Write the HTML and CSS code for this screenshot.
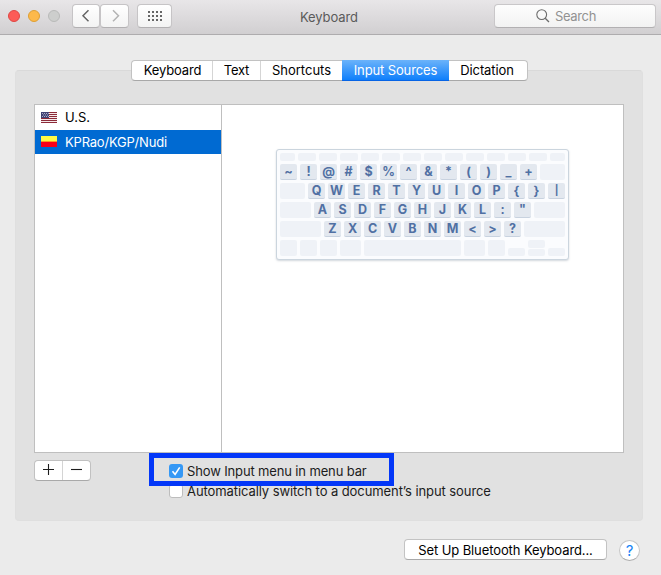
FILE: index.html
```html
<!DOCTYPE html>
<html lang="en">
<head>
<meta charset="utf-8">
<title>Keyboard</title>
<link rel="stylesheet" href="styles.css">
</head>
<body>
<header class="titlebar">
  <div class="lights"><i class="light red"></i><i class="light amber"></i><i class="light gray"></i></div>
  <div class="nav">
    <button class="tool"><svg width="26" height="22" viewBox="0 0 26 22"><path d="M15.500 5.300 10 10.800l5.500 5.500" fill="none" stroke="#666" stroke-width="1.500"/></svg></button>
    <button class="tool"><svg width="26" height="22" viewBox="0 0 26 22"><path d="M11 5.300l5.500 5.500-5.500 5.500" fill="none" stroke="#b4b4b4" stroke-width="1.500"/></svg></button>
  </div>
  <button class="tool grid"><svg width="33" height="22" viewBox="0 0 33 22"><path d="M10 7h14M10 11h14M10 15h14" fill="none" stroke="#666" stroke-width="2" stroke-dasharray="2 2"/></svg></button>
  <h1 class="title">Keyboard</h1>
  <div class="search"><svg width="14" height="14" viewBox="0 0 14 14"><circle cx="5.700" cy="5.600" r="4.900" fill="none" stroke="#6b6b6b" stroke-width="1.100"/><path d="M9.200 9.200l3.800 3.800" stroke="#6b6b6b" stroke-width="1.300"/></svg><span>Search</span></div>
</header>
<main class="panel">
  <nav class="tabs">
    <span class="tab t1">Keyboard</span><span class="tab t2">Text</span><span class="tab t3">Shortcuts</span><span class="tab t4 active">Input Sources</span><span class="tab t5">Dictation</span>
  </nav>
  <section class="sources">
    <ul class="list">
      <li><svg class="flag" width="16" height="11" viewBox="0 0 16 11"><path fill="#f4e9ea" d="M0 0h16v11H0z"/><path d="M0 .5h16M0 2.500h16M0 4.500h16M0 6.500h16M0 8.500h16M0 10.500h16" stroke="#8c2a38"/><path fill="#3f4273" d="M0 0h8v6H0z"/><path d="M1 1.500h7M2 3h6M1 4.500h7" stroke="#c5c7dc" stroke-width=".8" stroke-dasharray="1 1"/></svg><span class="us">U.S.</span></li>
      <li class="selected"><svg class="flag" width="16" height="11" viewBox="0 0 16 11"><path fill="#fffb45" d="M0 0h16v5H0z"/><path fill="#ff9b24" d="M0 5h16v1H0z"/><path fill="#fa0019" d="M0 6h16v5H0z"/></svg><span class="kp">KPRao/KGP/Nudi</span></li>
    </ul>
    <div class="preview">
      <div class="board">
        <div class="row fn"><b class="w15"></b><b></b><b></b><b></b><b></b><b></b><b></b><b></b><b></b><b></b><b></b><b></b><b></b><b class="w15"></b></div>
        <div class="row"><kbd>~</kbd><kbd>!</kbd><kbd>@</kbd><kbd>#</kbd><kbd>$</kbd><kbd>%</kbd><kbd>^</kbd><kbd>&amp;</kbd><kbd>*</kbd><kbd>(</kbd><kbd>)</kbd><kbd>_</kbd><kbd>+</kbd><b class="fill"></b></div>
        <div class="row"><b class="fill"></b><kbd>Q</kbd><kbd>W</kbd><kbd>E</kbd><kbd>R</kbd><kbd>T</kbd><kbd>Y</kbd><kbd>U</kbd><kbd>I</kbd><kbd>O</kbd><kbd>P</kbd><kbd>{</kbd><kbd>}</kbd><kbd class="bar">|</kbd></div>
        <div class="row"><b class="fill"></b><kbd>A</kbd><kbd>S</kbd><kbd>D</kbd><kbd>F</kbd><kbd>G</kbd><kbd>H</kbd><kbd>J</kbd><kbd>K</kbd><kbd>L</kbd><kbd>:</kbd><kbd>"</kbd><b class="fill"></b></div>
        <div class="row"><b class="fill"></b><kbd>Z</kbd><kbd>X</kbd><kbd>C</kbd><kbd>V</kbd><kbd>B</kbd><kbd>N</kbd><kbd>M</kbd><kbd>&lt;</kbd><kbd>&gt;</kbd><kbd>?</kbd><b class="fill"></b></div>
        <div class="row"><b></b><b></b><b></b><b class="w21"></b><b class="fill"></b><b class="w21"></b><b></b><b class="half"></b><div class="stack"><b></b><b></b></div><b class="half"></b></div>
      </div>
    </div>
  </section>
  <footer class="controls">
    <div class="addremove"><span><svg width="27" height="19" viewBox="0 0 27 19"><path d="M8 8.500h11M13.500 3v11" stroke="#1d1d1d" stroke-width="1.100"/></svg></span><span><svg width="27" height="19" viewBox="0 0 27 19"><path d="M8 8.500h11" stroke="#1d1d1d" stroke-width="1.100"/></svg></span></div>
    <div class="options">
      <label class="option highlight"><i class="check on"><svg width="14" height="14" viewBox="0 0 14 14"><path d="M3.500 7.300l2.600 3.100 4.600-7" fill="none" stroke="#fff" stroke-width="1.600"/></svg></i><span class="show">Show Input menu in menu bar</span></label>
      <label class="option second"><i class="check"></i><span class="auto">Automatically switch to a document’s input source</span></label>
    </div>
  </footer>
</main>
<div class="actions"><button class="setup"><span>Set Up Bluetooth Keyboard...</span></button><button class="help">?</button></div>
</body>
</html>
```
FILE: styles.css
```css
* { box-sizing: border-box; }
body { margin: 0; width: 661px; height: 575px; background: #ebebeb; overflow: hidden; font: 13px/16px Inter, "Liberation Sans", sans-serif; color: #1c1c1c; }
button { margin: 0; padding: 0; font: inherit; color: inherit; }
svg { display: block; flex: none; }
span { white-space: nowrap; }

.titlebar { height: 35px; display: flex; align-items: flex-start; background: linear-gradient(#e8e6e8, #d1cfd1); border-bottom: 1px solid #aeacae; }
.lights { display: flex; gap: 8px; padding: 10px 0 0 8px; }
.light { width: 12px; height: 12px; border-radius: 50%; border: 1px solid; }
.red { background: #fc5b57; border-color: #df4744; }
.amber { background: #fdb94a; border-color: #de9f34; }
.gray { background: #cdcecd; border-color: #b9bab9; }
.nav { display: flex; margin: 4px 0 0 12px; }
.tool { width: 28px; height: 24px; background: linear-gradient(#fff, #f3f3f3); border: 1px solid #c6c4c6; border-bottom-color: #b2b0b2; border-radius: 4px; display: flex; align-items: center; justify-content: center; overflow: hidden; }
.tool + .tool { width: 29px; }
.grid { width: 35px; margin: 4px 0 0 8px; }
.title { margin: 9px 0 0 128px; width: 60px; font-size: 13px; line-height: 16px; font-weight: 400; letter-spacing: -.12px; color: #5a5a5a; }
.search { margin: 4px 0 0 134px; width: 162px; height: 24px; display: flex; align-items: center; gap: 5px; padding-left: 41px; letter-spacing: -.35px; color: #929292; background: linear-gradient(#fdfdfd, #f2f2f2); border: 1px solid #c9c7c9; border-bottom-color: #b2b0b2; border-radius: 4px; }

.panel { margin: 35px 0 0 15px; width: 628px; height: 451px; padding: 0 18px; background: #e1e1e1; border: 1px solid #d9d9d9; border-color: #d9d9d9 #dfdfdf #dfdfdf; border-radius: 4px; display: flex; flex-direction: column; }
.tabs { flex: none; display: flex; width: 397px; height: 21px; margin: -11px 0 0 97px; background: #fff; border: 1px solid #c2c2c2; border-bottom-color: #a8a8a8; border-radius: 4px; color: #000; }
.tab { display: flex; justify-content: center; line-height: 19px; border-left: 1px solid #d5d5d5; }
.t1 { width: 80px; border-left: 0; letter-spacing: -.15px; padding-left: 1px; }
.t2 { width: 48px; letter-spacing: -.25px; }
.t3 { width: 82px; }
.t4 { width: 107px; letter-spacing: -.12px; }
.t5 { flex: 1; border-left: 0; letter-spacing: -.1px; padding-right: 2px; }
.active { margin: -1px 0; line-height: 21px; color: #fff; border: 0; background: linear-gradient(#6bb3fa, #0f7ffb); border-bottom: 1px solid #0764e5; }

.sources { flex: none; display: flex; margin-top: 23px; width: 590px; height: 349px; background: #fff; border: 1px solid #bfbfbf; }
.list { width: 187px; margin: 0; padding: 0; list-style: none; border-right: 1px solid #bfbfbf; color: #000; }
.list li { height: 25px; display: flex; align-items: center; gap: 8px; padding: 0 0 1px 6px; }
.list .selected { height: 24px; padding-bottom: 0; background: #006ad2; color: #fff; }
.selected .flag { margin-top: -1px; }
.kp { letter-spacing: -.2px; }
.preview { flex: 1; padding: 44px 0 0 54px; }
.board { width: 293px; height: 111px; padding: 3px; border: 1px solid #cbd5de; border-radius: 3px; background: #fbfcfe; box-shadow: 0 1px 2px rgba(80, 100, 120, .25); display: flex; flex-direction: column; gap: 3px; }
.row { display: flex; gap: 3px; height: 16px; }
.row b { width: 17px; border-radius: 2px; background: #eff2f7; }
.row .fill { flex: 1; }
.row .w21 { width: 21px; }
.row .half { height: 8px; align-self: flex-end; }
.fn { height: 8px; }
.fn b { width: 18px; }
.fn .w15 { width: 15px; }
.stack { display: flex; flex-direction: column; gap: 1px; width: 17px; }
.stack b { flex: 1; }
kbd { width: 17px; height: 16px; border-radius: 2px; background: #e3e8ef; border-bottom: 1px solid #c8d2df; color: #5070a3; font: 700 12.5px/16px Inter, sans-serif; text-align: center; }
.bar { font-size: 10px; line-height: 15px; }

.controls { display: flex; }
.addremove { display: flex; margin-top: 7px; width: 57px; height: 21px; border: 1px solid #c1c1c1; border-bottom-color: #a9a9a9; border-radius: 4px; background: #fff; }
.addremove span + span { border-left: 1px solid #d4d4d4; }
.options { margin-left: 58px; }
.option { display: flex; gap: 4px; line-height: 16px; }
.highlight { position: relative; z-index: 1; width: 245px; height: 33px; border: 5px solid #0337f8; padding: 5px 0 0 15px; }
.check { width: 14px; height: 14px; margin-top: 1px; border-radius: 3px; background: #fff; border: 1px solid #bdbdbd; }
.on { border: 0; background: #3598f5; }
.show { letter-spacing: -.14px; }
.auto { letter-spacing: -.085px; }
.second { margin-top: -3px; padding-left: 20px; }

.actions { display: flex; gap: 12px; margin: 18px 0 0 404px; }
.setup { width: 203px; height: 21px; background: #fff; border: 1px solid #c3c3c3; border-bottom-color: #a9a9a9; border-radius: 4px; line-height: 18px; letter-spacing: -.1px; color: #000; }
.help { width: 21px; height: 21px; margin-top: 1px; border-radius: 50%; border: 1px solid #c6c6c6; border-bottom-color: #adadad; background: #fff; color: #1683f6; font-size: 15px; line-height: 19px; }
```
